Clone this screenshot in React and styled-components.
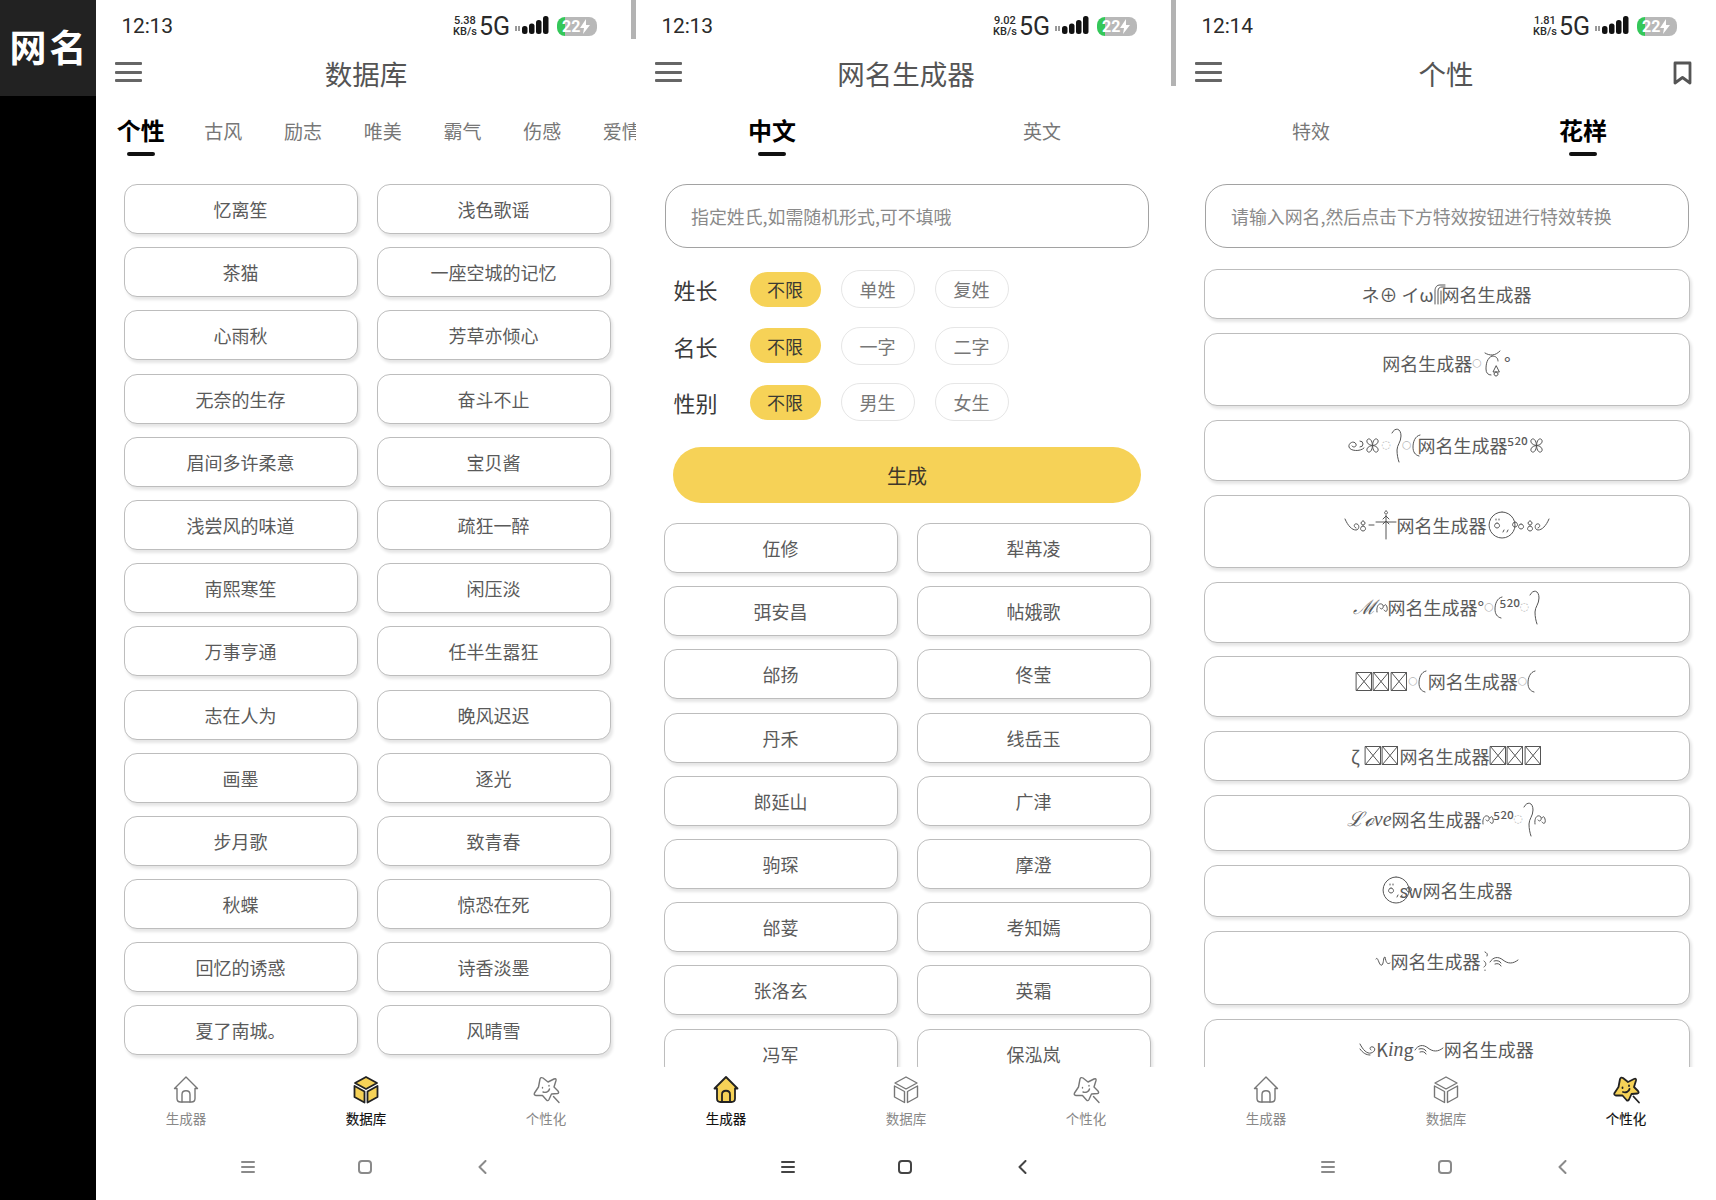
import React from 'react';
import styled, { createGlobalStyle } from 'styled-components';

const YELLOW = '#f6d257';
const FONT = '"Noto Sans CJK SC", "Noto Sans", "DejaVu Sans", sans-serif';

const GlobalStyle = createGlobalStyle`
  html, body {
    margin: 0;
    padding: 0;
    background: #000;
  }
  body {
    font-family: ${FONT};
  }
`;

const Page = styled.div`
  display: flex;
  width: 1716px;
  height: 1200px;
  overflow: hidden;
`;

const Strip = styled.div`
  width: 96px;
  flex: none;
  background: #000;
`;

const Logo = styled.div`
  height: 96px;
  background: #222;
  color: #fff;
  font-size: 37px;
  font-weight: 700;
  letter-spacing: 3px;
  display: flex;
  align-items: center;
  justify-content: center;
  padding: 0 0 4px 3px;
  box-sizing: border-box;
  white-space: nowrap;
`;

const Screen = styled.div`
  position: relative;
  width: 540px;
  height: 1200px;
  flex: none;
  background: #fff;
  display: flex;
  flex-direction: column;
  overflow: hidden;
`;

const ScrollMark = styled.div`
  position: absolute;
  top: 0;
  right: 0;
  width: 5px;
  height: ${(p) => p.$h}px;
  background: #b3b3b3;
`;

const StatusBar = styled.div`
  height: 52px;
  flex: none;
  display: flex;
  align-items: center;
  justify-content: space-between;
  padding: 0 39px 0 25.5px;
  font-family: Roboto, sans-serif;
  color: #2a2a2a;
`;

const Time = styled.span`
  font-size: 21px;
  letter-spacing: -0.2px;
`;

const StatusRight = styled.div`
  display: flex;
  align-items: center;
`;

const Speed = styled.span`
  font-size: 11px;
  line-height: 11px;
  font-weight: 500;
  text-align: center;
  margin-right: 2px;
`;

const Net = styled.span`
  font-size: 25px;
  margin-right: 3px;
`;

const Battery = styled.span`
  position: relative;
  width: 40px;
  height: 19px;
  margin-left: 6px;
  border-radius: 8px;
  background: linear-gradient(90deg, #34c759 0 8px, #b8b8b8 8px);
  color: #fff;
  font-size: 16px;
  font-weight: 700;
  line-height: 19px;
  padding-left: 5px;
  box-sizing: border-box;
  display: flex;
  align-items: center;
`;

const Header = styled.div`
  position: relative;
  height: 42px;
  flex: none;
  display: flex;
  align-items: center;
  justify-content: center;
  font-size: 27.5px;
  color: #555;
`;

const MenuButton = styled.div`
  position: absolute;
  left: 19px;
  top: 10px;
  width: 27px;
  height: 20px;
  display: flex;
  flex-direction: column;
  justify-content: space-between;
  span {
    display: block;
    height: 3px;
    border-radius: 1px;
    background: #666;
  }
`;

const BookmarkButton = styled.div`
  position: absolute;
  right: 24px;
  top: 9px;
  line-height: 0;
`;

const ScrollTabs = styled.div`
  height: 90px;
  flex: none;
  display: flex;
  white-space: nowrap;
  > :first-child {
    margin-right: -2.2px;
  }
`;

const SplitTabs = styled.div`
  height: 90px;
  flex: none;
  display: grid;
  grid-template-columns: ${(p) => p.$cols};
`;

const Tab = styled.div`
  display: flex;
  flex-direction: column;
  align-items: center;
  padding: ${(p) => (p.$active ? '21px' : '22px')} ${(p) => (p.$wide ? '0' : '20.85px')} 0;
  flex: none;
  font-size: ${(p) => (p.$active ? 24 : 19)}px;
  font-weight: ${(p) => (p.$active ? 700 : 400)};
  line-height: 30px;
  color: ${(p) => (p.$active ? '#000' : '#777')};
  &::after {
    content: '';
    display: ${(p) => (p.$active ? 'block' : 'none')};
    width: 28px;
    height: 3.5px;
    margin-top: 7px;
    border-radius: 2px;
    background: #111;
  }
`;

const Body = styled.div`
  flex: 1;
  min-height: 0;
  overflow: hidden;
  padding: 0 25px 0 27.5px;
`;

const NameGrid = styled.div`
  display: grid;
  grid-template-columns: 234px 234px;
  column-gap: 19px;
  row-gap: 13.2px;
`;

const NameCard = styled.div`
  height: 50px;
  box-sizing: border-box;
  border: 1.5px solid #bdbdbd;
  border-radius: 13px;
  box-shadow: 2px 3px 3px rgba(0, 0, 0, 0.1);
  background: #fff;
  display: flex;
  align-items: center;
  justify-content: center;
  font-size: 18px;
  color: #5a5a5a;
`;

const SearchInput = styled.input`
  display: block;
  width: 484px;
  height: 64px;
  margin-left: 1.5px;
  box-sizing: border-box;
  border: 1.5px solid #a2a2a2;
  border-radius: 22px;
  padding: 0 25px;
  outline: none;
  font-family: ${FONT};
  font-size: 17.9px;
  background: #fff;
  &::placeholder {
    color: #8a8a8a;
    opacity: 1;
  }
`;

const Filters = styled.div`
  display: flex;
  flex-direction: column;
  gap: 18.5px;
  margin: 22px 0 0 10px;
`;

const FilterRow = styled.div`
  display: flex;
  align-items: center;
  height: 38px;
`;

const FilterLabel = styled.span`
  width: 76px;
  font-size: 22px;
  color: #3a3a3a;
`;

const Pill = styled.span`
  width: ${(p) => (p.$active ? 71 : 74)}px;
  height: ${(p) => (p.$active ? 35 : 38)}px;
  margin-right: 20px;
  box-sizing: border-box;
  border-radius: 19px;
  border: ${(p) => (p.$active ? 'none' : '1.5px solid #e6e6e6')};
  background: ${(p) => (p.$active ? YELLOW : '#fff')};
  color: ${(p) => (p.$active ? '#3b3a33' : '#777')};
  font-size: 18px;
  display: flex;
  align-items: center;
  justify-content: center;
`;

const GenerateButton = styled.div`
  width: 468px;
  height: 56px;
  margin: 26px 0 20px 9.5px;
  border-radius: 28px;
  background: ${YELLOW};
  color: #40372a;
  font-size: 20px;
  display: flex;
  align-items: center;
  justify-content: center;
`;

const FancyList = styled.div`
  display: flex;
  flex-direction: column;
  gap: 13.9px;
  margin-top: 21px;
  width: 486px;
`;

const FancyCard = styled.div`
  height: ${(p) => p.$h}px;
  flex: none;
  box-sizing: border-box;
  padding-top: ${(p) => p.$top}px;
  border: 1.5px solid #bdbdbd;
  border-radius: 13px;
  box-shadow: 2px 3px 3px rgba(0, 0, 0, 0.1);
  background: #fff;
  display: flex;
  justify-content: center;
  align-items: flex-start;
  font-size: 18px;
  line-height: 30px;
  color: #5a5a5a;
  white-space: nowrap;
`;

const FancyLine = styled.div`
  display: flex;
  align-items: center;
  height: 30px;
`;

const Fancy = styled.span`
  height: 30px;
  line-height: 30px;
`;

const Zeta = styled(Fancy)`
  margin-right: 5px;
`;

const Script = styled.span`
  font-family: "Liberation Serif", "DejaVu Serif", serif;
  font-style: italic;
  font-size: 20px;
  line-height: 30px;
`;

const Ring = styled.span`
  font-family: "DejaVu Sans", sans-serif;
  font-size: 11px;
  line-height: 30px;
  color: #b5b5b5;
`;

const Mark = styled.svg`
  flex: none;
  overflow: visible;
  fill: none;
  stroke: #555;
  stroke-width: 1;
  stroke-linecap: round;
  margin-right: ${(p) => p.$overlap || 0}px;
`;

const BottomNav = styled.div`
  position: relative;
  height: 133px;
  flex: none;
  background: #fff;
  display: flex;
  flex-direction: column;
`;

const NavItems = styled.div`
  display: grid;
  grid-template-columns: 180px 180px 180px;
  height: 85px;
`;

const NavItem = styled.div`
  display: flex;
  flex-direction: column;
  align-items: center;
  padding-top: 8px;
  font-size: 13.5px;
  line-height: 20px;
  color: ${(p) => (p.$active ? '#111' : '#888')};
  -webkit-text-stroke: ${(p) => (p.$active ? '0.15px #111' : '0')};
  svg {
    margin-bottom: 4px;
  }
`;

const SystemNav = styled.div`
  position: relative;
  height: 30px;
  display: grid;
  grid-template-columns: 117px 117px 118px;
  justify-items: center;
  align-items: center;
  padding-left: 93px;
  line-height: 0;
  color: ${(p) => (p.$dark ? '#444' : '#8a8a8a')};
`;

const Line = styled.svg`
  fill: none;
  stroke: currentColor;
  stroke-width: 2;
  stroke-linecap: round;
  stroke-linejoin: round;
`;

const NavIcon = styled.svg`
  fill: none;
  stroke: ${(p) => (p.$active ? '#222' : '#777')};
  stroke-width: ${(p) => (p.$active ? 1.8 : 1.4)};
  stroke-linejoin: round;
  stroke-linecap: round;
`;

// little decorations of the fancy names
const MARKS = {
  curl: [11, 36, 'M1 6C4 0 10 1 10 9C10 15 6 18 6 23C6 28 7 32 8 35'],
  hook: [10, 24, 'M8 2C3 3 1 9 1 14C1 19 3 22 7 23'],
  arch: [12, 20, 'M1 20V7C1 3 3 1 6 1H11M4 20V7C4 4 6 3 8 3H11M7 20V7'],
  berry: [22, 26, 'M3 3C8 6 13 6 18 1M10 6C5 8 4 14 4 19C4 23 6 25 9 25M10 6C14 6 16 8 16 11M14 16L11 22H17ZM14 22a2 2 0 1 0 .1 0'],
  snail: [16, 14, 'M16 10C12 14 2 13 1 9C0 5 6 2 8 6C9 9 5 10 4 8M12 3a3 3 0 1 1 0 6'],
  flower: [17, 17, 'M8.500 8.500C3 8 2 4 3.500 2.500C5 1 8 2 8.500 8.500C9 2 12 1 13.500 2.500C15 4 14 8 8.500 8.500C14 9 15 13 13.500 14.500C12 16 9 15 8.500 8.500C8 15 5 16 3.500 14.500C2 13 3 9 8.500 8.500'],
  wingL: [31, 16, 'M1 2C4 9 8 13 12 13C15 13 16 8 13 7C10 6 9 10 12 11M19 9a2.500 2.500 0 1 0 .1 0M19 4a2 2 0 1 0 .1 0M25 8H30'],
  wingR: [33, 16, 'M32 2C29 9 25 13 21 13C18 13 17 8 20 7C23 6 24 10 21 11M13 9a2.500 2.500 0 1 0 .1 0M13 4a2 2 0 1 0 .1 0M4 7a2.500 2.500 0 1 0 .1 0'],
  cross: [22, 30, 'M1 12H21M11 5V29M8 9L11 6L14 9M8 14L11 11L14 14M11 1a1.500 1.500 0 1 0 .1 0'],
  face: [30, 28, 'M15 1a13 13 0 1 0 .1 0M10 12a2.500 2.500 0 1 0 .1 0M9 8v1M12 8v1M17 19l-1 2M21 19l-1 2M28 11a2.500 2.500 0 1 0 .1 0'],
  tail: [30, 14, 'M1 8C4 3 9 2 14 6C19 10 24 10 29 6M5 7C8 6 11 7 12 9M6 10C9 9 11 10 12 12'],
  swirl: [17, 14, 'M1 2C4 8 8 12 12 11C16 10 17 6 14 5C11 4 10 7 12 8M1 7C4 11 7 13 11 13'],
  squig: [16, 14, 'M1 5C3 1 4 13 7 11C9 9 8 3 10 3C11 8 12 11 15 9'],
  comma: [8, 20, 'M3 10C6 12 5 15 3 16M4 19v.5M4 1C6 2 7 3 6 5'],
  loop: [12, 12, 'M1 11C0 4 4 1 7 4C8 8 5 9 4 7M8 9C10 12 12 10 11 6C10 3 9 3 8 5'],
  // missing-glyph box, the font of the phone had no such character
  tofu: [16, 19, 'M.5 .5H15.500V18.500H.5ZM.5 .5L15.500 18.500M15.500 .5L.5 18.500'],
};

function Decor({ name, overlap }) {
  const [w, h, d] = MARKS[name];
  return (
    <Mark $overlap={overlap} width={w} height={h} viewBox={`0 0 ${w} ${h}`}>
      <path d={d} />
    </Mark>
  );
}

function Tofu({ count }) {
  return Array.from({ length: count }, (_, i) => <Decor key={i} name="tofu" overlap={1.5} />);
}

function Bars() {
  return (
    <svg width="38" height="20" viewBox="0 0 38 20">
      <path d="M3 10v5M6 10v5" stroke="#333" strokeWidth="1" />
      <rect x="9" y="10" width="5.500" height="8" rx="2.500" fill="#111" />
      <rect x="16" y="7.500" width="5.500" height="10.500" rx="2.500" fill="#111" />
      <rect x="23" y="4" width="5.500" height="14" rx="2.500" fill="#111" />
      <rect x="30" y="0" width="5.500" height="18" rx="2.500" fill="#111" />
    </svg>
  );
}

function Status({ time, speed }) {
  return (
    <StatusBar>
      <Time>{time}</Time>
      <StatusRight>
        <Speed>
          {speed}
          <br />
          KB/s
        </Speed>
        <Net>5G</Net>
        <Bars />
        <Battery>
          22
          <svg width="10" height="15" viewBox="0 0 10 15">
            <path d="M6 0L0 9H4L3 15L10 6H6Z" fill="#fff" />
          </svg>
        </Battery>
      </StatusRight>
    </StatusBar>
  );
}

function TopBar({ title, bookmark }) {
  return (
    <Header>
      <MenuButton>
        <span />
        <span />
        <span />
      </MenuButton>
      {title}
      {bookmark && (
        <BookmarkButton>
          <svg width="19" height="24" viewBox="0 0 19 24" fill="none" stroke="#555" strokeWidth="2.800" strokeLinejoin="round">
            <path d="M2 2H17V22L9.500 16.500L2 22Z" />
          </svg>
        </BookmarkButton>
      )}
    </Header>
  );
}

function HouseIcon({ active }) {
  return (
    <NavIcon $active={active} width="28" height="29" viewBox="0 0 28 29">
      <path
        d="M14 2L2.500 13.500H5V23.500C5 25.500 6.500 27 8.500 27H19.500C21.500 27 23 25.500 23 23.500V13.500H25.500Z"
        fill={active ? YELLOW : 'none'}
      />
      <path d="M10 27V19.500C10 14.500 18 14.500 18 19.500V27" />
    </NavIcon>
  );
}

function BoxIcon({ active }) {
  return (
    <NavIcon $active={active} width="28" height="29" viewBox="0 0 28 29">
      <path d="M14 2L25 8L14 14L3 8Z" fill={active ? YELLOW : 'none'} />
      <path d="M2.500 11L12.500 16.500V27.500L2.500 22Z" fill={active ? YELLOW : 'none'} />
      <path d="M25.500 11L15.500 16.500V27.500L25.500 22Z" fill={active ? YELLOW : 'none'} />
    </NavIcon>
  );
}

function StarIcon({ active }) {
  return (
    <NavIcon $active={active} width="30" height="29" viewBox="0 0 30 29">
      <path
        d="M7.500 12L9 4Q10 1.800 12 3L17 7L23 4Q25.500 3 25 5.500L23 12L27 16Q28.500 18 26.500 18.500L20.500 19L18 24.500Q17 26.500 15.500 25L11.500 20.500L5 20.500Q2.500 20 3.500 18Z"
        fill={active ? YELLOW : 'none'}
      />
      <path d="M22.500 21.500L28 27.500" />
      <path d="M11.500 12.500v.5M18 10.500v.5M12 17C15 18 18 16.500 18.500 14" />
    </NavIcon>
  );
}

function Footer({ active, dark }) {
  return (
    <BottomNav>
      <NavItems>
        <NavItem $active={active === 0}>
          <HouseIcon active={active === 0} />
          生成器
        </NavItem>
        <NavItem $active={active === 1}>
          <BoxIcon active={active === 1} />
          数据库
        </NavItem>
        <NavItem $active={active === 2}>
          <StarIcon active={active === 2} />
          个性化
        </NavItem>
      </NavItems>
      <SystemNav $dark={dark}>
        <Line width="14" height="14" viewBox="0 0 14 14" strokeWidth="1.500">
          <path d="M1 2H13M1 7H13M1 12H13" />
        </Line>
        <Line width="14" height="14" viewBox="0 0 14 14">
          <rect x="1" y="1" width="12" height="12" rx="3" />
        </Line>
        <Line width="9" height="14" viewBox="0 0 9 14" strokeWidth="1.500">
          <path d="M7.500 1L1.500 7L7.500 13" />
        </Line>
      </SystemNav>
    </BottomNav>
  );
}

const LIBRARY = [
  '忆离笙', '浅色歌谣', '茶猫', '一座空城的记忆', '心雨秋', '芳草亦倾心', '无奈的生存', '奋斗不止',
  '眉间多许柔意', '宝贝酱', '浅尝风的味道', '疏狂一醉', '南熙寒笙', '闲压淡', '万事亨通', '任半生嚣狂',
  '志在人为', '晚风迟迟', '画墨', '逐光', '步月歌', '致青春', '秋蝶', '惊恐在死',
  '回忆的诱惑', '诗香淡墨', '夏了南城。', '风晴雪',
];

const GENERATED = [
  '伍修', '犁苒凌', '弭安昌', '帖娥歌', '邰扬', '佟莹', '丹禾', '线岳玉', '郎延山', '广津',
  '驹琛', '摩澄', '邰荽', '考知嫣', '张洛玄', '英霜', '冯军', '保泓岚',
];

const CATEGORIES = ['个性', '古风', '励志', '唯美', '霸气', '伤感', '爱情'];

const FILTERS = [
  ['姓长', '单姓', '复姓'],
  ['名长', '一字', '二字'],
  ['性别', '男生', '女生'],
];

const BASE = '网名生成器';

const FANCY = [
  {
    h: 50,
    top: 9,
    body: (
      <>
        <Fancy>ネ⊕ イω</Fancy>
        <Decor name="arch" overlap={-4} />
        <Fancy>{BASE}</Fancy>
      </>
    ),
  },
  {
    h: 73.5,
    top: 14,
    body: (
      <>
        <Fancy>{BASE}</Fancy>
        <Ring>○</Ring>
        <Decor name="berry" />
        <Fancy>°</Fancy>
      </>
    ),
  },
  {
    h: 60.5,
    top: 9,
    body: (
      <>
        <Decor name="snail" />
        <Decor name="flower" />
        <Ring>◌</Ring>
        <Decor name="curl" />
        <Ring>○</Ring>
        <Decor name="hook" overlap={-4} />
        <Fancy>{BASE}⁵²⁰</Fancy>
        <Decor name="flower" />
      </>
    ),
  },
  {
    h: 73.5,
    top: 14,
    body: (
      <>
        <Decor name="wingL" />
        <Decor name="cross" />
        <Fancy>{BASE}</Fancy>
        <Decor name="face" />
        <Decor name="wingR" />
      </>
    ),
  },
  {
    h: 60.5,
    top: 9,
    body: (
      <>
        <Script>ℳ</Script>
        <Decor name="loop" />
        <Fancy>{BASE}°</Fancy>
        <Ring>○</Ring>
        <Decor name="hook" overlap={-4} />
        <Fancy>⁵²⁰</Fancy>
        <Ring>◌</Ring>
        <Decor name="curl" />
      </>
    ),
  },
  {
    h: 60.5,
    top: 9,
    body: (
      <>
        <Tofu count={3} />
        <Ring>○</Ring>
        <Decor name="hook" />
        <Fancy>{BASE}</Fancy>
        <Ring>○</Ring>
        <Decor name="hook" />
      </>
    ),
  },
  {
    h: 50,
    top: 9,
    body: (
      <>
        <Zeta>ζ</Zeta>
        <Tofu count={2} />
        <Fancy>{BASE}</Fancy>
        <Tofu count={3} />
      </>
    ),
  },
  {
    h: 56.5,
    top: 8,
    body: (
      <>
        <Script>ℒℴve</Script>
        <Fancy>{BASE}</Fancy>
        <Decor name="loop" />
        <Fancy>⁵²⁰</Fancy>
        <Ring>◌</Ring>
        <Decor name="curl" />
        <Decor name="loop" />
      </>
    ),
  },
  {
    h: 52,
    top: 9,
    body: (
      <>
        <Decor name="face" overlap={-11} />
        <Fancy>sw{BASE}</Fancy>
      </>
    ),
  },
  {
    h: 74,
    top: 14,
    body: (
      <>
        <Decor name="squig" />
        <Fancy>{BASE}</Fancy>
        <Decor name="comma" />
        <Decor name="tail" />
      </>
    ),
  },
  {
    h: 74,
    top: 14,
    body: (
      <>
        <Decor name="swirl" />
        <Fancy>K</Fancy>
        <Script>in</Script>
        <Fancy>g</Fancy>
        <Decor name="tail" />
        <Fancy>{BASE}</Fancy>
      </>
    ),
  },
];

function LibraryScreen() {
  return (
    <Screen>
      <ScrollMark $h={39} />
      <Status time="12:13" speed="5.38" />
      <TopBar title="数据库" />
      <ScrollTabs>
        {CATEGORIES.map((c, i) => (
          <Tab key={c} $active={i === 0}>
            {c}
          </Tab>
        ))}
      </ScrollTabs>
      <Body>
        <NameGrid>
          {LIBRARY.map((n) => (
            <NameCard key={n}>{n}</NameCard>
          ))}
        </NameGrid>
      </Body>
      <Footer active={1} />
    </Screen>
  );
}

function GeneratorScreen() {
  return (
    <Screen>
      <ScrollMark $h={86} />
      <Status time="12:13" speed="9.02" />
      <TopBar title="网名生成器" />
      <SplitTabs $cols="272px 268px">
        <Tab $active $wide>
          中文
        </Tab>
        <Tab $wide>英文</Tab>
      </SplitTabs>
      <Body>
        <SearchInput readOnly placeholder="指定姓氏,如需随机形式,可不填哦" />
        <Filters>
          {FILTERS.map(([label, a, b]) => (
            <FilterRow key={label}>
              <FilterLabel>{label}</FilterLabel>
              <Pill $active>不限</Pill>
              <Pill>{a}</Pill>
              <Pill>{b}</Pill>
            </FilterRow>
          ))}
        </Filters>
        <GenerateButton>生成</GenerateButton>
        <NameGrid>
          {GENERATED.map((n) => (
            <NameCard key={n}>{n}</NameCard>
          ))}
        </NameGrid>
      </Body>
      <Footer active={0} dark />
    </Screen>
  );
}

function StyleScreen() {
  return (
    <Screen>
      <Status time="12:14" speed="1.81" />
      <TopBar title="个性" bookmark />
      <SplitTabs $cols="270px 274px">
        <Tab $wide>特效</Tab>
        <Tab $active $wide>
          花样
        </Tab>
      </SplitTabs>
      <Body>
        <SearchInput readOnly placeholder="请输入网名,然后点击下方特效按钮进行特效转换" />
        <FancyList>
          {FANCY.map((f, i) => (
            <FancyCard key={i} $h={f.h} $top={f.top}>
              <FancyLine>{f.body}</FancyLine>
            </FancyCard>
          ))}
        </FancyList>
      </Body>
      <Footer active={2} />
    </Screen>
  );
}

export default function App() {
  return (
    <Page>
      <GlobalStyle />
      <Strip>
        <Logo>网名</Logo>
      </Strip>
      <LibraryScreen />
      <GeneratorScreen />
      <StyleScreen />
    </Page>
  );
}
